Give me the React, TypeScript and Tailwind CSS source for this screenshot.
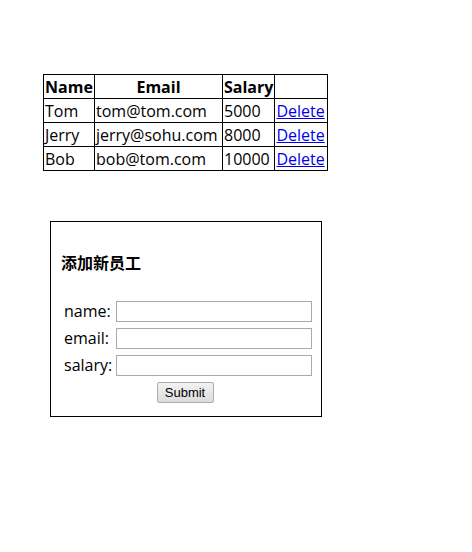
import React from "react";

const employees = [
  { name: "Tom", email: "tom@tom.com", salary: "5000" },
  { name: "Jerry", email: "jerry@sohu.com", salary: "8000" },
  { name: "Bob", email: "bob@tom.com", salary: "10000" },
];

const cell = "border border-black px-[1px] h-[24px] leading-[22px] whitespace-nowrap";

const App: React.FC = () => {
  return (
    <div
      className="min-h-[552px] w-[472px] bg-white text-black text-[16px] pt-[74px] pl-[43px]"
      style={{ fontFamily: '"Open Sans", "Noto Sans CJK SC", sans-serif' }}
    >
      <table className="border-collapse border border-black">
        <thead>
          <tr>
            <th className={`${cell} w-[51px] font-bold`}>Name</th>
            <th className={`${cell} w-[128px] font-bold`}>Email</th>
            <th className={`${cell} w-[52px] font-bold`}>Salary</th>
            <th className={`${cell} w-[53px]`}></th>
          </tr>
        </thead>
        <tbody>
          {employees.map((e) => (
            <tr key={e.name}>
              <td className={cell}>{e.name}</td>
              <td className={cell}>{e.email}</td>
              <td className={cell}>{e.salary}</td>
              <td className={cell}>
                <a href="#" className="text-[#0000ee] underline">
                  Delete
                </a>
              </td>
            </tr>
          ))}
        </tbody>
      </table>

      {/* Add form */}
      <div className="mt-[50px] ml-[7px] w-[272px] h-[196px] border border-black pl-[10px] pr-[6px] pt-[31px]">
        <h3 className="font-bold text-[16px] leading-[20px]">添加新员工</h3>
        <div className="mt-[28px] flex flex-col gap-[6px]">
          {["name:", "email:", "salary:"].map((label) => (
            <div key={label} className="flex items-center h-[21px]">
              <span className="w-[55px] pl-[3px] leading-[21px]">{label}</span>
              <input
                type="text"
                className="w-[196px] h-[21px] border border-[#a9a9a9] bg-white outline-none"
              />
            </div>
          ))}
        </div>
        <div className="mt-[6px] flex justify-center pr-[6px]">
          <button
            type="submit"
            className="w-[57px] h-[21px] border border-[#adadad] rounded-[2px] bg-gradient-to-b from-[#f2f2f2] to-[#dcdcdc] text-[13px] leading-[19px]"
            style={{ fontFamily: '"Liberation Sans", Arial, sans-serif' }}
          >
            Submit
          </button>
        </div>
      </div>
    </div>
  );
};

export default App;
